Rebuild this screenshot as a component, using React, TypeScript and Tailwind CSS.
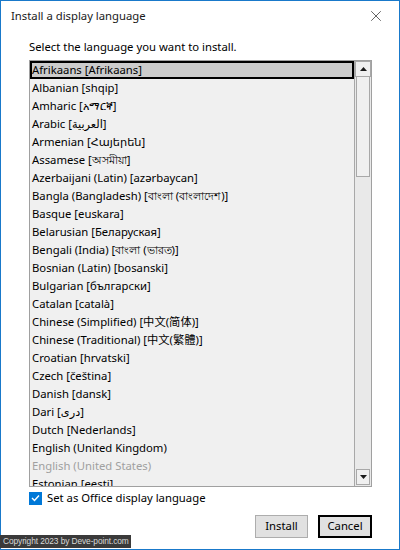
import { X } from 'lucide-react'

const languages: { label: string; disabled?: boolean }[] = [
  { label: 'Afrikaans [Afrikaans]' },
  { label: 'Albanian [shqip]' },
  { label: 'Amharic [አማርኛ]' },
  { label: 'Arabic [العربية]' },
  { label: 'Armenian [Հայերեն]' },
  { label: 'Assamese [অসমীয়া]' },
  { label: 'Azerbaijani (Latin) [azərbaycan]' },
  { label: 'Bangla (Bangladesh) [বাংলা (বাংলাদেশ)]' },
  { label: 'Basque [euskara]' },
  { label: 'Belarusian [Беларуская]' },
  { label: 'Bengali (India) [বাংলা (ভারত)]' },
  { label: 'Bosnian (Latin) [bosanski]' },
  { label: 'Bulgarian [български]' },
  { label: 'Catalan [català]' },
  { label: 'Chinese (Simplified) [中文(简体)]' },
  { label: 'Chinese (Traditional) [中文(繁體)]' },
  { label: 'Croatian [hrvatski]' },
  { label: 'Czech [čeština]' },
  { label: 'Danish [dansk]' },
  { label: 'Dari [دری]' },
  { label: 'Dutch [Nederlands]' },
  { label: 'English (United Kingdom)' },
  { label: 'English (United States)', disabled: true },
  { label: 'Estonian [eesti]' },
]

const ui = "font-['Segoe_UI','Noto_Sans','Noto_Sans_CJK_SC','DejaVu_Sans',sans-serif]"

function Arrow({ up }: { up?: boolean }) {
  return (
    <svg width="7" height="4" viewBox="0 0 7 4" className="block">
      <path d={up ? 'M0 4 L3.5 0 L7 4 Z' : 'M0 0 L3.5 4 L7 0 Z'} fill="#1a1a1a" />
    </svg>
  )
}

function ScrollBar() {
  return (
    <div className="flex w-[17px] shrink-0 flex-col border-l border-[#a8a8a8] bg-[#e9e9e9]">
      <div className="flex h-[16px] items-center justify-center border border-[#a8a8a8] bg-[#f0f0f0]">
        <Arrow up />
      </div>
      <div className="mx-[1px] h-[100px] border border-t-0 border-[#a8a8a8] bg-[#f0f0f0]" />
      <div className="flex-1" />
      <div className="mx-[1px] mb-[1px] flex h-[16px] items-center justify-center border border-[#a8a8a8] bg-[#f0f0f0]">
        <Arrow />
      </div>
    </div>
  )
}

function LanguageList() {
  return (
    <div className="mt-[5px] flex h-[427px] w-[343px] border border-[#a0a0a0] bg-[#f0f0f0]">
      <div className="flex-1 overflow-hidden">
        {languages.map((l, i) => (
          <div
            key={l.label}
            className={
              i === 0
                ? 'h-[18px] whitespace-nowrap border-2 border-black bg-[#cccccc] text-[11.3px] leading-[13px] text-black'
                : `h-[18px] whitespace-nowrap pl-[2px] text-[11.3px] leading-[17px] ${l.disabled ? 'text-[#a0a0a0]' : 'text-black'}`
            }
          >
            {l.label}
          </div>
        ))}
      </div>
      <ScrollBar />
    </div>
  )
}

export default function App() {
  return (
    <div className={`relative flex h-[550px] w-[400px] flex-col border border-[#1979ca] bg-white ${ui}`}>
      {/* title bar */}
      <div className="flex h-[30px] items-center justify-between">
        <span className="pl-[10px] pt-[1px] text-[11.3px] text-[#1a1a1a]">Install a display language</span>
        <div className="flex h-[30px] w-[46px] items-center justify-center">
          <X size={18} strokeWidth={0.9} color="#1a1a1a" />
        </div>
      </div>

      <div className="flex flex-col pl-[28px]">
        <p className="mt-[8px] text-[11.3px] leading-[16px] text-black">Select the language you want to install.</p>
        <LanguageList />

        <label className="mt-[3px] flex items-center gap-[5px]">
          <span className="flex h-[13px] w-[13px] items-center justify-center bg-[#0078d7]">
            <svg width="9" height="8" viewBox="0 0 9 8">
              <path d="M1 4 L3.5 6.5 L8 1.5" fill="none" stroke="white" strokeWidth="1.4" />
            </svg>
          </span>
          <span className="text-[11.3px] leading-[16px] text-black">Set as Office display language</span>
        </label>

        <div className="mt-[9px] flex w-[343px] justify-end gap-[10px]">
          <button className="h-[23px] w-[53px] border border-[#adadad] bg-[#e1e1e1] text-[11.3px] text-black">
            Install
          </button>
          <button className="h-[23px] w-[54px] border-2 border-black bg-[#e1e1e1] text-[11.3px] text-black">
            Cancel
          </button>
        </div>
      </div>

      <div className="absolute bottom-[1px] left-[-1px] flex h-[13px] w-[131px] items-center overflow-hidden whitespace-nowrap bg-[#3a3a3a] pl-[3px] font-['Liberation_Sans',Arial,sans-serif] text-[8.4px] tracking-[-0.1px] text-[#d8d8d8]">
        Copyright 2023 by Deve-point.com
      </div>
    </div>
  )
}
